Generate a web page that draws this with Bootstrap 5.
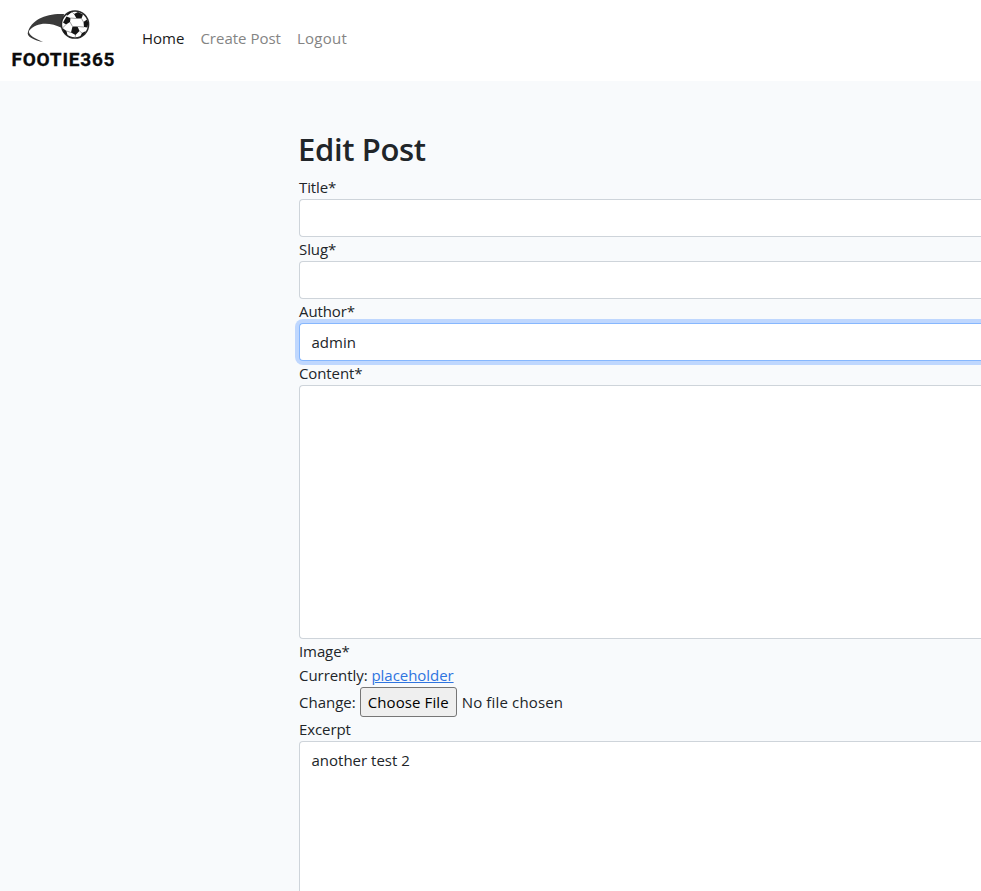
<!DOCTYPE html>
<html lang="en">
<head>
<meta charset="utf-8">
<meta name="viewport" content="width=device-width, initial-scale=1">
<title>Edit Post</title>
<link href="https://cdn.jsdelivr.net/npm/bootstrap@5.3.0/dist/css/bootstrap.min.css" rel="stylesheet">
<style>
body{font-family:"Open Sans","Noto Sans",sans-serif;font-size:15px;line-height:24px;background:#f8fafc;color:#212529;overflow:hidden;height:891px}
.site-nav{height:81px}
.site-nav .navbar-nav{padding-top:18px}
.site-nav .nav-link{font-size:15px;line-height:24px;white-space:nowrap;color:#848484}
.site-nav .nav-link.active{color:#1a1a1a}
.site-nav .nav-link:last-child{letter-spacing:.25px}
.page-main{height:810px;overflow:hidden}
.post-form{margin-left:299px}
.post-form h2{font-size:31px;line-height:38px;font-weight:600;letter-spacing:-.35px;position:relative;top:1px;left:-1px}
.post-form label{display:block;height:24px;letter-spacing:-.1px}
.post-form .form-control{font-size:15px;line-height:24px;border-color:#ced4da;border-radius:4px 0 0 4px;border-right:0;height:38px;background:#fff;color:#212529;resize:none;display:block;padding-left:11.500px}
.post-form textarea.content-field{height:254px}
.post-form textarea.excerpt-field{height:150px;border-bottom:0;border-bottom-left-radius:0}
.post-form .author-field{border-color:#86b7fe;box-shadow:0 0 0 4px #bfd7fe}
.pick{height:30px;width:97px;border:1px solid #767676;border-radius:3px;background:#efefef;color:#000;padding:0;margin:0 5px 0 4px;letter-spacing:.1px}
.pick + .t{letter-spacing:.15px}
.currently{letter-spacing:-.05px}
.t{display:inline-block;white-space:nowrap}
.post-form a{color:#2f74e0}
</style>
<script src="https://cdn.jsdelivr.net/npm/bootstrap@5.3.0/dist/js/bootstrap.bundle.min.js"></script>
</head>
<body>
<nav class="site-nav navbar navbar-expand bg-white p-0 align-items-start">
  <a class="d-block flex-shrink-0" href="#" aria-label="FOOTIE365">
    <svg class="d-block" width="134" height="80" viewBox="0 0 134 80">
      <path d="M28 32C31 20 46 13 64 14L62 28C50 22 36 22 29 31C28 35 36 39 43 42C33 40 26 36 28 32Z" fill="#3a3a3a"/>
      <circle cx="75" cy="24.500" r="13.600" fill="#fff" stroke="#292929" stroke-width="1.500"/>
      <g fill="#151515">
        <path d="M72.500 26.500L77.500 26.500L79.500 31L75.500 35L71 32.500Z"/>
        <path d="M66.500 16.500L70.500 18L70 22L66 24.500L63 22.500Z"/>
        <path d="M74 14L78 12L83 14.500L81.500 18.500L76.500 18.500Z"/>
        <path d="M83.500 22L87 19.500L88.300 23L87.500 27.500L84 27Z"/>
        <path d="M62.500 28L66.500 31L67.500 35.500L64 33Z"/>
        <path d="M82 33L86 31L84 34.500L80 37Z"/>
        <path d="M66 15L69.500 12L72 12L67.500 15.500Z"/>
      </g>
      <path d="M70.500 18L76.500 18.500M81.500 18.500L83.500 22M84 27L77.500 26.500M70 22L72.500 26.500M71 32.500L66.500 31M79.500 31L82 33M66 24.500L62.500 28M74 14L72 12M75.500 35L75 38" fill="none" stroke="#777" stroke-width=".7"/>
      <text x="11.500" y="66" textLength="103" lengthAdjust="spacing" font-family="Roboto, sans-serif" font-weight="700" font-size="19" fill="#0c0c0c" stroke="#0c0c0c" stroke-width=".3">FOOTIE365</text>
    </svg>
  </a>
  <div class="navbar-nav">
    <a class="nav-link active" href="#"><span class="t">Home</span></a>
    <a class="nav-link" href="#"><span class="t">Create Post</span></a>
    <a class="nav-link" href="#"><span class="t">Logout</span></a>
  </div>
</nav>
<main class="page-main pt-5">
  <form class="post-form">
    <h2 class="mb-2">Edit Post</h2>
    <label for="title"><span class="t">Title*</span></label>
    <input class="form-control" id="title" type="text">
    <label for="slug"><span class="t">Slug*</span></label>
    <input class="form-control" id="slug" type="text">
    <label for="author"><span class="t">Author*</span></label>
    <div class="form-control author-field" id="author"><span class="t">admin</span></div>
    <label for="content"><span class="t">Content*</span></label>
    <textarea class="form-control content-field" id="content"></textarea>
    <label><span class="t">Image*</span></label>
    <div class="currently"><span class="t">Currently:</span> <a href="#" class="t">placeholder</a></div>
    <div class="d-flex align-items-center"><span class="t">Change:</span><button type="button" class="pick"><span class="t">Choose File</span></button><span class="t">No file chosen</span></div>
    <label for="excerpt"><span class="t">Excerpt</span></label>
    <textarea class="form-control excerpt-field" id="excerpt">another test 2</textarea>
  </form>
</main>
</body>
</html>
